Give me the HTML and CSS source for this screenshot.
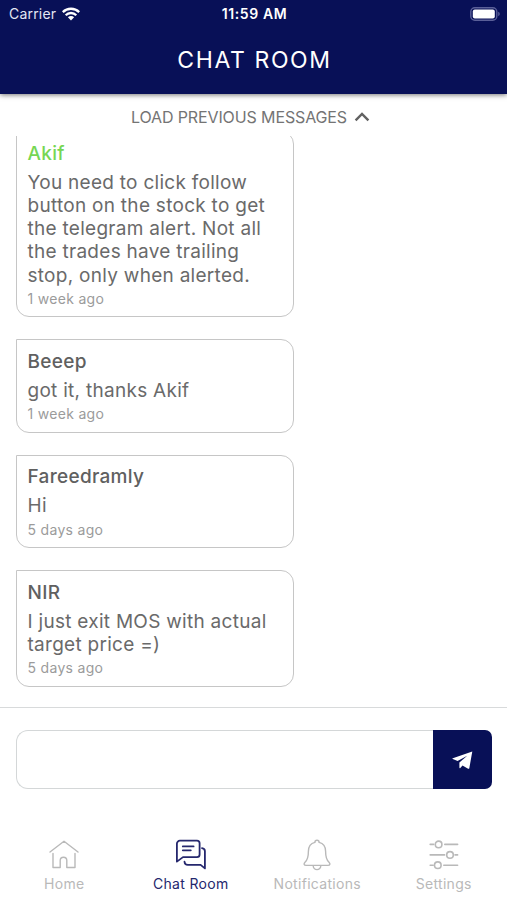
FILE: index.html
```html
<!DOCTYPE html>
<html lang="en">
<head>
<meta charset="utf-8">
<title>Chat Room</title>
<link rel="stylesheet" href="styles.css">
</head>
<body>
<div class="app">
  <header class="header">
    <div class="status">
      <div class="carrier"><span>Carrier</span>
        <svg class="wifi" viewBox="0 0 18 14" width="18" height="14"><g fill="none" stroke="#fff" stroke-width="2.3"><path d="M.8 5.1a11.7 11.7 0 0 1 16.4 0"/><path d="M3.7 8.2a7.5 7.5 0 0 1 10.6 0"/></g><path fill="#fff" d="M5.9 10.2a4.4 4.4 0 0 1 6.2 0L9 13.5z"/></svg>
      </div>
      <div class="clock">11:59 AM</div>
      <div class="power">
        <svg viewBox="0 0 30 14" width="30" height="14"><rect x=".8" y=".8" width="26" height="12.4" rx="4" fill="none" stroke="#5a5f98" stroke-width="1.4"/><rect x="2.8" y="2.6" width="22" height="8.800" rx="2" fill="#fff"/><path d="M28.2 4.8q1.6.6 1.6 2.2t-1.6 2.2z" fill="#5a5f98"/></svg>
      </div>
    </div>
    <h1 class="title">CHAT ROOM</h1>
  </header>

  <button class="load"><span>LOAD PREVIOUS MESSAGES</span>
    <svg viewBox="0 0 16 10" width="16" height="10"><path d="M1.6 8.4 8 2l6.4 6.4" fill="none" stroke="#626262" stroke-width="2.4"/></svg>
  </button>

  <main class="messages">
    <article class="card">
      <h2 class="name name-admin">Akif</h2>
      <p class="text">You need to click follow<br>button on the stock to get<br>the telegram alert. Not all<br>the trades have trailing<br>stop, only when alerted.</p>
      <time class="time">1 week ago</time>
    </article>
    <article class="card">
      <h2 class="name">Beeep</h2>
      <p class="text">got it, thanks Akif</p>
      <time class="time">1 week ago</time>
    </article>
    <article class="card">
      <h2 class="name">Fareedramly</h2>
      <p class="text">Hi</p>
      <time class="time">5 days ago</time>
    </article>
    <article class="card">
      <h2 class="name">NIR</h2>
      <p class="text">I just exit MOS with actual<br>target price =)</p>
      <time class="time">5 days ago</time>
    </article>
  </main>

  <form class="composer">
    <input class="field" type="text" aria-label="Message">
    <button class="send" type="button" aria-label="Send">
      <svg viewBox="0 0 21 18" width="21" height="18"><path fill="#fff" d="M20.3.6.8 7.2q-.8.5 0 .9l4.800 2L15.200 4.800 7.400 11.400v5.200q.2.900.9.300l2.200-2.300 5.600 3.100q1 .300 1.200-.500z"/></svg>
    </button>
  </form>

  <nav class="tabs">
    <a class="tab">
      <svg viewBox="0 0 32 32" width="32" height="32" fill="none" stroke="currentColor" stroke-width="1.4" stroke-linecap="round" stroke-linejoin="round"><path d="M2 13 16 2.300 30 13M5 14.500v14h7.200V21.500a3.300 3.300 0 0 1 6.600 0v7H27v-14"/></svg>
      <span>Home</span>
    </a>
    <a class="tab tab-active">
      <svg viewBox="0 0 32 32" width="32" height="32" fill="none" stroke="currentColor" stroke-width="1.8" stroke-linecap="round" stroke-linejoin="round"><path d="M5 1.700h17a2.600 2.600 0 0 1 2.600 2.600v11.200a2.600 2.600 0 0 1-2.600 2.600H8L1.900 22.600V4.700a3 3 0 0 1 3.100-3zM7.800 7.400h10.800M7.800 11.300h8"/><path d="M27 9.200q2.900.3 2.900 3v17.200L25.600 25.900H12.800q-3.100 0-3.300-3.200"/></svg>
      <span>Chat Room</span>
    </a>
    <a class="tab">
      <svg viewBox="0 0 32 32" width="32" height="32" fill="none" stroke="currentColor" stroke-width="1.4" stroke-linecap="round" stroke-linejoin="round"><path d="M13.900 3.400a2.100 2.100 0 0 1 4.200 0c4 1 6.500 4.400 6.500 8.900 0 6 .8 8.700 3.400 11 1.600 1.700.9 3.100-1 3.100H5c-1.900 0-2.600-1.400-1-3.100 2.600-2.300 3.400-5 3.400-11 0-4.500 2.500-7.900 6.500-8.900zM12.200 26.800a3.800 3.800 0 0 0 7.600 0"/></svg>
      <span>Notifications</span>
    </a>
    <a class="tab">
      <svg viewBox="0 0 32 32" width="32" height="32" fill="none" stroke="currentColor" stroke-width="1.6" stroke-linecap="round"><circle cx="10.600" cy="5.400" r="3.300"/><circle cx="22" cy="15.900" r="3.300"/><circle cx="9.800" cy="26.200" r="3.300"/><path d="M2.200 5.400h3.400M16.800 5.400h12.800M2.200 15.900h14.400M27 15.900h2.600M2.200 26.200h3M15.800 26.200h13.800"/></svg>
      <span>Settings</span>
    </a>
  </nav>
</div>
</body>
</html>
```
FILE: styles.css
```css
* { box-sizing: border-box; }
body {
  margin: 0;
  background: #fff;
  font-family: Inter, "Liberation Sans", sans-serif;
}
.app {
  width: 507px;
  height: 900px;
  display: flex;
  flex-direction: column;
  overflow: hidden;
}
.header {
  flex: none;
  height: 94px;
  background: #081057;
  color: #fff;
  box-shadow: 0 1px 5px rgba(0, 0, 0, .55);
}
.status {
  height: 27px;
  padding: 0 7px 0 9px;
  display: grid;
  grid-template-columns: 1fr auto 1fr;
  align-items: center;
  font-size: 14px;
  line-height: 27px;
}
.carrier {
  display: flex;
  align-items: center;
  gap: 6px;
  color: #e4e6f3;
  letter-spacing: .2px;
}
.clock {
  font-size: 14px;
  font-weight: 600;
  letter-spacing: .6px;
}
.power {
  display: flex;
  justify-content: flex-end;
}
.title {
  margin: 0;
  padding-left: 2px;
  line-height: 66px;
  text-align: center;
  font-size: 23px;
  font-weight: 400;
  letter-spacing: 1.600px;
}
.load {
  flex: none;
  height: 42px;
  padding: 3px 6px 0 0;
  border: 0;
  background: none;
  display: flex;
  align-items: center;
  justify-content: center;
  gap: 7px;
  color: #747474;
  font: 400 16px/20px Inter, sans-serif;
  letter-spacing: -.120px;
}
.messages {
  height: 572px;
  flex: none;
  padding: 0 16px 20.500px;
  border-bottom: 1px solid #d8dadb;
  display: flex;
  flex-direction: column;
  justify-content: flex-end;
  align-items: flex-start;
  gap: 22.200px;
  overflow: hidden;
}
.card {
  flex: none;
  width: 278px;
  padding: 9.700px 10.500px 7.300px;
  border: 1.400px solid #c6c6c6;
  border-radius: 0 13px 13px 13px;
}
.name {
  margin: 0 0 6px;
  font-size: 19px;
  line-height: 23px;
  font-weight: 500;
  color: #606060;
  letter-spacing: .3px;
}
.name-admin { color: #76d653; }
.text {
  margin: 0 0 2px;
  font-size: 19px;
  line-height: 23.200px;
  color: #6a6a6a;
  letter-spacing: .280px;
  white-space: nowrap;
}
.time {
  display: block;
  font-size: 14px;
  line-height: 20px;
  color: #9b9b9b;
  letter-spacing: .3px;
}
.composer {
  flex: none;
  height: 59px;
  margin: 22px 15px 0 16px;
  display: flex;
}
.field {
  flex: 1;
  min-width: 0;
  border: 1.400px solid #d4d7d8;
  border-right: 0;
  border-radius: 12px 0 0 12px;
  background: #fff;
  outline: 0;
}
.send {
  width: 59px;
  border: 0;
  padding: 0;
  border-radius: 0 7px 7px 0;
  background: #081057;
  display: flex;
  align-items: center;
  justify-content: center;
}
.tabs {
  flex: 1;
  padding: 50px 0 0 1px;
  display: grid;
  grid-template-columns: repeat(4, 1fr);
}
.tab {
  display: flex;
  flex-direction: column;
  align-items: center;
  gap: 3px;
  color: #b9b9b9;
  font-size: 14px;
  line-height: 20px;
  letter-spacing: .3px;
}
.tab-active { color: #25276d; }
```
